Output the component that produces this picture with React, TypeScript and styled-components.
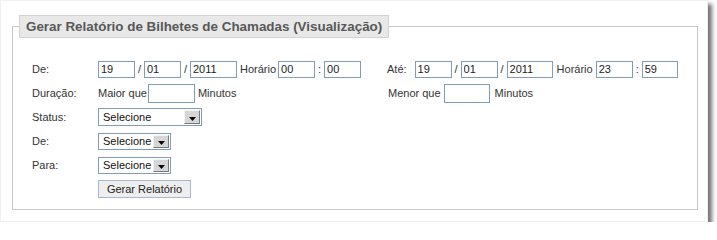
import styled, { createGlobalStyle } from "styled-components";

const GlobalStyle = createGlobalStyle`
  html, body {
    margin: 0;
    padding: 0;
    background: #ffffff;
  }
  body {
    font-family: "Liberation Sans", Arial, sans-serif;
    font-size: 11px;
    color: #333333;
  }
`;

const Panel = styled.div`
  box-sizing: border-box;
  width: 708px;
  height: 222px;
  background: #ffffff;
  border: 1px solid #f0f0f0;
  box-shadow: 4px 4px 4px rgba(0, 0, 0, 0.55);
  padding-top: 14px;
`;

const Frame = styled.fieldset`
  box-sizing: border-box;
  width: 686px;
  height: 195px;
  margin: 0 0 0 11px;
  padding: 0;
  border: 1px solid #c8c8c8;
  min-inline-size: 0;
`;

const Title = styled.legend`
  margin-left: 6px;
  padding: 3px 6px;
  background: #e8e8e8;
  border: 1px solid #d2d2d2;
  font-size: 13.4px;
  line-height: 15px;
  font-weight: bold;
  color: #585858;
`;

const Body = styled.div`
  display: grid;
  grid-template-columns: 66px 289px auto;
  grid-auto-rows: 24px;
  align-items: center;
  padding: 19px 0 7px 19px;
`;

const Label = styled.div`
  grid-column: 1;
  color: #333;
`;

const Cell = styled.div<{ span?: boolean }>`
  display: flex;
  align-items: center;
  grid-column: ${({ span }) => (span ? "2 / 4" : "auto")};
`;

const Text = styled.span<{ ml?: number; mr?: number }>`
  margin-left: ${({ ml }) => ml ?? 0}px;
  margin-right: ${({ mr }) => mr ?? 0}px;
  white-space: nowrap;
`;

const Sep = styled.span`
  width: 9px;
  text-align: center;
`;

const Field = styled.input<{ w: number; h?: number }>`
  box-sizing: border-box;
  width: ${({ w }) => w}px;
  height: ${({ h }) => h ?? 17}px;
  margin: 0;
  padding: 0 2px;
  border: 1px solid #7f9db9;
  font-family: "Liberation Sans", Arial, sans-serif;
  font-size: 11px;
  color: #222;
  background: #fff;
  outline: none;
`;

const SelectBox = styled.div<{ w: number; h: number }>`
  box-sizing: border-box;
  display: flex;
  align-items: center;
  width: ${({ w }) => w}px;
  height: ${({ h }) => h}px;
  border: 1px solid #7f9db9;
  background: #fff;
  padding: 1px;
  color: #111;
`;

const SelectText = styled.span`
  flex: 1;
  padding-left: 3px;
  font-size: 11px;
`;

const Arrow = styled.span`
  box-sizing: border-box;
  display: flex;
  align-items: center;
  justify-content: center;
  width: 16px;
  height: 100%;
  background: #d6d6d6;
  border: 1px solid;
  border-color: #f2f2f2 #7a7a7a #7a7a7a #f2f2f2;
  padding-top: 3px;
`;

const Button = styled.button`
  box-sizing: border-box;
  width: 93px;
  height: 18px;
  margin: 0;
  padding: 0;
  background: #eeeeee;
  border: 1px solid #a7bacb;
  font-family: "Liberation Sans", Arial, sans-serif;
  font-size: 11px;
  color: #222;
`;

const Caret = () => (
  <svg width="7" height="4" viewBox="0 0 7 4">
    <path d="M0 0 H7 L3.5 4 Z" fill="#000" />
  </svg>
);

const Select = ({ w, h }: { w: number; h: number }) => (
  <SelectBox w={w} h={h}>
    <SelectText>Selecione</SelectText>
    <Arrow>
      <Caret />
    </Arrow>
  </SelectBox>
);

export default function App() {
  return (
    <>
      <GlobalStyle />
      <Panel>
        <Frame>
          <Title>Gerar Relatório de Bilhetes de Chamadas (Visualização)</Title>
          <Body>
            <Label>De:</Label>
            <Cell>
              <Field w={37} defaultValue="19" />
              <Sep>/</Sep>
              <Field w={37} defaultValue="01" />
              <Sep>/</Sep>
              <Field w={47} defaultValue="2011" />
              <Text ml={3} mr={2}>Horário</Text>
              <Field w={37} defaultValue="00" />
              <Sep>:</Sep>
              <Field w={37} defaultValue="00" />
            </Cell>
            <Cell>
              <Text mr={8}>Até:</Text>
              <Field w={37} defaultValue="19" />
              <Sep>/</Sep>
              <Field w={37} defaultValue="01" />
              <Sep>/</Sep>
              <Field w={46} defaultValue="2011" />
              <Text ml={4} mr={3}>Horário</Text>
              <Field w={37} defaultValue="23" />
              <Sep>:</Sep>
              <Field w={36} defaultValue="59" />
            </Cell>

            <Label>Duração:</Label>
            <Cell>
              <Text mr={1}>Maior que</Text>
              <Field w={47} h={19} />
              <Text ml={3}>Minutos</Text>
            </Cell>
            <Cell>
              <Text ml={1} mr={3}>Menor que</Text>
              <Field w={46} h={19} />
              <Text ml={5}>Minutos</Text>
            </Cell>

            <Label>Status:</Label>
            <Cell span>
              <Select w={104} h={18} />
            </Cell>

            <Label>De:</Label>
            <Cell span>
              <Select w={73} h={17} />
            </Cell>

            <Label>Para:</Label>
            <Cell span>
              <Select w={73} h={17} />
            </Cell>

            <Label />
            <Cell span>
              <Button type="button">Gerar Relatório</Button>
            </Cell>
          </Body>
        </Frame>
      </Panel>
    </>
  );
}
